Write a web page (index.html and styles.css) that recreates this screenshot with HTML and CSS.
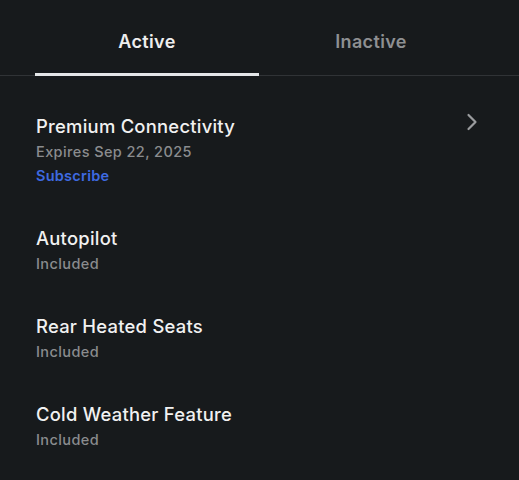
FILE: index.html
```html
<!DOCTYPE html>
<html>
<head>
<meta charset="utf-8">
<link rel="stylesheet" href="styles.css">
</head>
<body>
<div class="tabs">
  <div class="tab active">Active</div>
  <div class="tab">Inactive</div>
</div>
<div class="list">
  <div class="row">
    <div class="info">
      <div class="title">Premium Connectivity</div>
      <div class="sub">Expires Sep 22, 2025</div>
      <div class="link">Subscribe</div>
    </div>
    <svg class="chev" width="24" height="24" viewBox="0 0 24 24"><path d="M8.5 5 L15.5 12 L8.5 19" fill="none" stroke="#9a9c9e" stroke-width="2.2" stroke-linecap="round" stroke-linejoin="round"/></svg>
  </div>
  <div class="row">
    <div class="info">
      <div class="title">Autopilot</div>
      <div class="sub">Included</div>
    </div>
  </div>
  <div class="row">
    <div class="info">
      <div class="title">Rear Heated Seats</div>
      <div class="sub">Included</div>
    </div>
  </div>
  <div class="row">
    <div class="info">
      <div class="title">Cold Weather Feature</div>
      <div class="sub">Included</div>
    </div>
  </div>
</div>
</body>
</html>
```
FILE: styles.css
```css
html, body {
  margin: 0;
  padding: 0;
  background: #171a1c;
  font-family: Inter, "Noto Sans", sans-serif;
  -webkit-font-smoothing: antialiased;
}
.tabs {
  display: flex;
  padding: 0 36px 0 35px;
  border-bottom: 1px solid #303336;
  height: 75px;
}
.tab {
  flex: 1;
  display: flex;
  align-items: center;
  justify-content: center;
  font-size: 18px;
  letter-spacing: 0.35px;
  font-weight: 600;
  color: #8e9092;
  padding-top: 10px;
  box-sizing: border-box;
  border-bottom: 3px solid transparent;
  margin-bottom: -1px;
}
.tab.active {
  color: #eeeeee;
  border-bottom-color: #e4e6e8;
}
.list {
  padding: 19px 36px 0 36px;
}
.row {
  display: flex;
  align-items: flex-start;
  justify-content: space-between;
  padding: 19px 0;
}
.title {
  font-size: 18.4px;
  letter-spacing: 0.25px;
  line-height: 24px;
  margin-bottom: 2px;
  font-weight: 500;
  color: #f1f1f1;
}
.sub {
  font-size: 14.5px;
  letter-spacing: 0.4px;
  line-height: 24px;
  font-weight: 500;
  color: #8a8c8e;
}
.link {
  font-size: 14.5px;
  letter-spacing: 0.25px;
  line-height: 24px;
  font-weight: 600;
  color: #3e6ae1;
}
.chev {
  margin-top: -4px;
  margin-right: -1px;
}
```
